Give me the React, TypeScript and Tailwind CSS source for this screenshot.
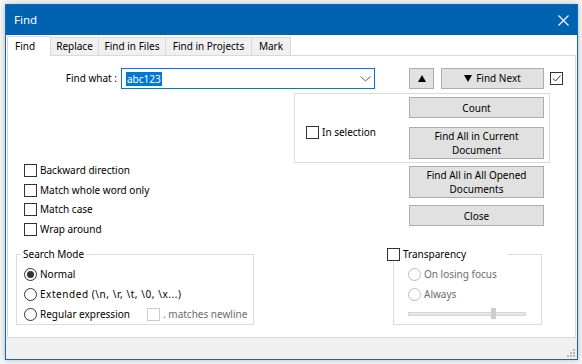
import React from 'react';

const font = "font-['Noto_Sans',sans-serif] text-[10px] text-black whitespace-nowrap";

function Box({ checked = false, disabled = false }: { checked?: boolean; disabled?: boolean }) {
  return (
    <span
      className={`relative block w-[13px] h-[13px] shrink-0 border bg-white ${
        disabled ? 'border-[#cccccc]' : 'border-[#333333]'
      }`}
    >
      {checked && (
        <svg className="absolute inset-0" width="11" height="11" viewBox="0 0 11 11">
          <path d="M2 5.5 L4.5 8 L9.5 2.5" fill="none" stroke="#333" strokeWidth="1" />
        </svg>
      )}
    </span>
  );
}

function Radio({ checked = false, disabled = false }: { checked?: boolean; disabled?: boolean }) {
  return (
    <span
      className={`w-[13px] h-[13px] shrink-0 rounded-full border bg-white flex items-center justify-center ${
        disabled ? 'border-[#bcbcbc]' : 'border-[#333333]'
      }`}
    >
      {checked && <span className="w-[7px] h-[7px] rounded-full bg-[#333333]" />}
    </span>
  );
}

function Check({ label, checked = false }: { label: string; checked?: boolean }) {
  return (
    <div className="h-[19.5px] flex items-center gap-[3px]">
      <Box checked={checked} />
      <span>{label}</span>
    </div>
  );
}

function Btn({ children, className = '' }: { children: React.ReactNode; className?: string }) {
  return (
    <div
      className={`w-[135px] flex items-center justify-center text-center leading-[14px] bg-[#e1e1e1] border border-[#adadad] ${className}`}
    >
      {children}
    </div>
  );
}

const tabs = ['Replace', 'Find in Files', 'Find in Projects', 'Mark'];
const tabWidths = ['w-[48px]', 'w-[67px]', 'w-[86px]', 'w-[39px]'];

export default function App() {
  return (
    <div className={`w-[582px] h-[364px] bg-[#f6f6f6] pt-[4px] pl-[5px] ${font}`}>
      <div className="w-[573px] h-[356px] flex flex-col border border-[#1565b5] bg-white shadow-[0_0_6px_rgba(0,0,0,0.25)]">
        {/* title bar */}
        <div className="h-[30px] bg-[#0063b1] flex items-center justify-between pl-[8px] pr-[8px] text-white text-[11.5px]">
          <span>Find</span>
          <svg width="11" height="11" viewBox="0 0 11 11">
            <path d="M0.5 0.5 L10.5 10.5 M10.5 0.5 L0.5 10.5" stroke="#fff" strokeWidth="1.2" />
          </svg>
        </div>

        {/* client */}
        <div className="flex-1 flex flex-col bg-white">
          <div className="h-[21px] flex items-end pl-[1px]">
            <div className="relative z-10 w-[44px] h-[20px] bg-white border-x border-t border-[#d9d9d9] pl-[7px] flex items-center">
              Find
            </div>
            {tabs.map((t, i) => (
              <div
                key={t}
                className={`${tabWidths[i]} h-[18px] mb-[1px] bg-[#f0f0f0] border-t border-r border-[#d9d9d9] flex items-center justify-center`}
              >
                {t}
              </div>
            ))}
          </div>

          <div className="-mt-[1px] mx-[1px] flex-1 border border-[#d9d9d9] flex flex-col">
            {/* row 1 */}
            <div className="mt-[12px] flex items-center">
              <span className="w-[109px] text-right">Find what :</span>
              <div className="ml-[4px] w-[254px] h-[21px] border border-[#0078d7] flex items-center justify-between pl-[4px] pr-[3px]">
                <span className="bg-[#0078d7] text-white leading-[14px] px-[1px]">abc123</span>
                <svg width="11" height="6" viewBox="0 0 11 6">
                  <path d="M0.5 0.5 L5.5 5 L10.5 0.5" fill="none" stroke="#606060" strokeWidth="1" />
                </svg>
              </div>
              <div className="ml-[34px] w-[25px] h-[21px] bg-[#e1e1e1] border border-[#adadad] flex items-center justify-center">
                <svg width="8" height="7" viewBox="0 0 8 7">
                  <path d="M4 0 L8 7 L0 7 Z" fill="#000" />
                </svg>
              </div>
              <div className="ml-[7px] w-[103px] h-[21px] bg-[#e1e1e1] border border-[#adadad] flex items-center justify-center gap-[4px]">
                <svg width="8" height="7" viewBox="0 0 8 7">
                  <path d="M0 0 L8 0 L4 7 Z" fill="#000" />
                </svg>
                <span>Find Next</span>
              </div>
              <div className="ml-[6px]">
                <Box checked />
              </div>
            </div>

            {/* row 2 */}
            <div className="mt-[4px] h-[146px] flex">
              <div className="w-[286px] pl-[16px] pt-[68px]">
                <Check label="Backward direction" />
                <Check label="Match whole word only" />
                <Check label="Match case" />
                <Check label="Wrap around" />
              </div>
              <div className="flex flex-col">
                <div className="w-[256px] h-[70px] border border-[#dcdcdc] flex pt-[3px] pl-[11px]">
                  <div className="w-[103px] flex items-center gap-[3px] self-center mt-[6px]">
                    <Box />
                    <span>In selection</span>
                  </div>
                  <div className="flex flex-col gap-[9px]">
                    <Btn className="h-[21px]">Count</Btn>
                    <Btn className="h-[32px]">
                      Find All in Current
                      <br />
                      Document
                    </Btn>
                  </div>
                </div>
                <div className="pl-[115px] pt-[3px] flex flex-col gap-[7px]">
                  <Btn className="h-[32px]">
                    Find All in All Opened
                    <br />
                    Documents
                  </Btn>
                  <Btn className="h-[21px]">Close</Btn>
                </div>
              </div>
            </div>

            {/* row 3 */}
            <div className="mt-[7px] flex items-start">
              <fieldset className="ml-[8px] w-[238px] h-[79px] border border-[#dcdcdc] pl-[7px]">
                <legend className="-ml-[3px] px-[2px] leading-[16px]">Search Mode</legend>
                <div className="pt-[2px]">
                  <div className="h-[20px] flex items-center gap-[3px]">
                    <Radio checked />
                    <span>Normal</span>
                  </div>
                  <div className="h-[20px] flex items-center gap-[3px]">
                    <Radio />
                    <span className="tracking-[0.55px]">Extended (\n, \r, \t, \0, \x...)</span>
                  </div>
                  <div className="h-[20px] flex items-center gap-[3px]">
                    <Radio />
                    <span className="w-[104px]">Regular expression</span>
                    <Box disabled />
                    <span className="text-[#6d6d6d]">. matches newline</span>
                  </div>
                </div>
              </fieldset>

              <fieldset className="ml-[139px] w-[149px] h-[79px] border border-[#dcdcdc] pl-[14px]">
                <legend className="-ml-[21px] w-[120px] bg-white leading-[16px] flex items-center gap-[3px]">
                  <Box />
                  <span>Transparency</span>
                </legend>
                <div className="pt-[2px] text-[#6d6d6d]">
                  <div className="h-[20px] flex items-center gap-[3px]">
                    <Radio disabled />
                    <span>On losing focus</span>
                  </div>
                  <div className="h-[20px] flex items-center gap-[3px]">
                    <Radio disabled />
                    <span>Always</span>
                  </div>
                  <div className="h-[20px] flex items-center">
                    <div className="relative w-[118px] h-[4px] bg-[#e7e7e7] border border-[#d6d6d6]">
                      <div className="absolute left-[82px] -top-[5px] w-[5px] h-[11px] bg-[#cdcdcd]" />
                    </div>
                  </div>
                </div>
              </fieldset>
            </div>
          </div>
        </div>

        {/* bottom strip */}
        <div className="h-[21px] bg-[#f0f0f0] flex items-end justify-end pr-[2px] pb-[2px]">
          <svg width="8" height="8" viewBox="0 0 8 8">
            <rect x="6" y="0" width="2" height="2" fill="#b8b8b8" />
            <rect x="3" y="3" width="2" height="2" fill="#b8b8b8" />
            <rect x="6" y="3" width="2" height="2" fill="#b8b8b8" />
            <rect x="0" y="6" width="2" height="2" fill="#b8b8b8" />
            <rect x="3" y="6" width="2" height="2" fill="#b8b8b8" />
            <rect x="6" y="6" width="2" height="2" fill="#b8b8b8" />
          </svg>
        </div>
      </div>
    </div>
  );
}
